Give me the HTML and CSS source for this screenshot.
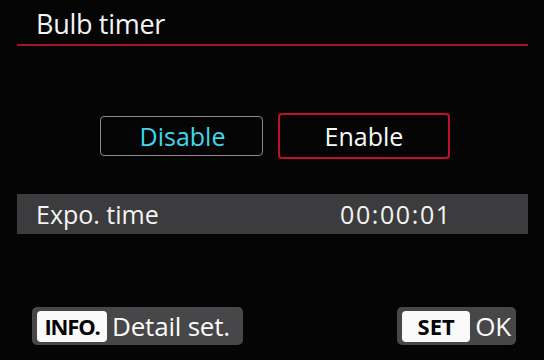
FILE: index.html
```html
<!DOCTYPE html>
<html>
<head>
<meta charset="utf-8">
<link rel="stylesheet" href="styles.css">
</head>
<body>
<div class="screen">
  <div class="header"><span class="title">Bulb timer</span></div>
  <div class="options">
    <div class="opt opt-off">Disable</div>
    <div class="opt opt-on">Enable</div>
  </div>
  <div class="band">
    <span class="label">Expo. time</span>
    <span class="value">00:00:01</span>
  </div>
  <div class="footer">
    <div class="key key-info"><span class="tag">INFO.</span><span class="ktext">Detail set.</span></div>
    <div class="key key-set"><span class="tag tag-set">SET</span><span class="ktext">OK</span></div>
  </div>
</div>
</body>
</html>
```

FILE: styles.css
```css
html, body {
  margin: 0;
  padding: 0;
  background: #050505;
}
.screen {
  width: 544px;
  height: 360px;
  background: #050505;
  color: #f4f4f4;
  font-family: "Open Sans", "Noto Sans", sans-serif;
  display: flex;
  flex-direction: column;
  overflow: hidden;
}
.header {
  margin: 0 16px 0 17px;
  height: 44px;
  padding-left: 19px;
  border-bottom: 2px solid #a8102a;
  box-sizing: content-box;
  display: flex;
  align-items: flex-end;
}
.title {
  font-size: 27px;
  line-height: 30px;
  padding-bottom: 5px;
  letter-spacing: -0.3px;
}
.options {
  display: flex;
  align-items: center;
  gap: 15px;
  padding-left: 100px;
  margin-top: 67px;
  height: 46px;
}
.opt {
  box-sizing: border-box;
  display: flex;
  align-items: center;
  justify-content: center;
  font-size: 25px;
  border-radius: 4px;
}
.opt-off {
  width: 163px;
  height: 40px;
  border: 1.5px solid #8a8a8a;
  color: #3fd7ea;
  padding-left: 2px;
}
.opt-on {
  width: 172px;
  height: 46px;
  border: 2px solid #c0102c;
  color: #fafafa;
}
.band {
  margin: 35px 16px 0 17px;
  height: 40px;
  background: #3c3c3e;
  display: flex;
  align-items: center;
  font-size: 25px;
}
.label {
  padding-left: 19px;
  width: 304px;
}
.value {
  letter-spacing: 1.6px;
}
.footer {
  display: flex;
  justify-content: space-between;
  margin: 73px 28px 0 32px;
}
.key {
  box-sizing: border-box;
  height: 38px;
  background: #474749;
  border-radius: 5px;
  display: flex;
  align-items: center;
  padding: 0 5px;
  gap: 5px;
}
.key-info { width: 211px; }
.key-set { width: 119px; }
.tag {
  background: #fafafa;
  color: #050505;
  border-radius: 4px;
  height: 31px;
  width: 70px;
  display: flex;
  align-items: center;
  justify-content: center;
  font-weight: 700;
  font-size: 22px;
  letter-spacing: -1.2px;
  font-family: "Liberation Sans Narrow", "Open Sans", sans-serif;
}
.tag-set {
  letter-spacing: 0;
}
.ktext {
  font-size: 26px;
  color: #fafafa;
  letter-spacing: -0.2px;
}
```
